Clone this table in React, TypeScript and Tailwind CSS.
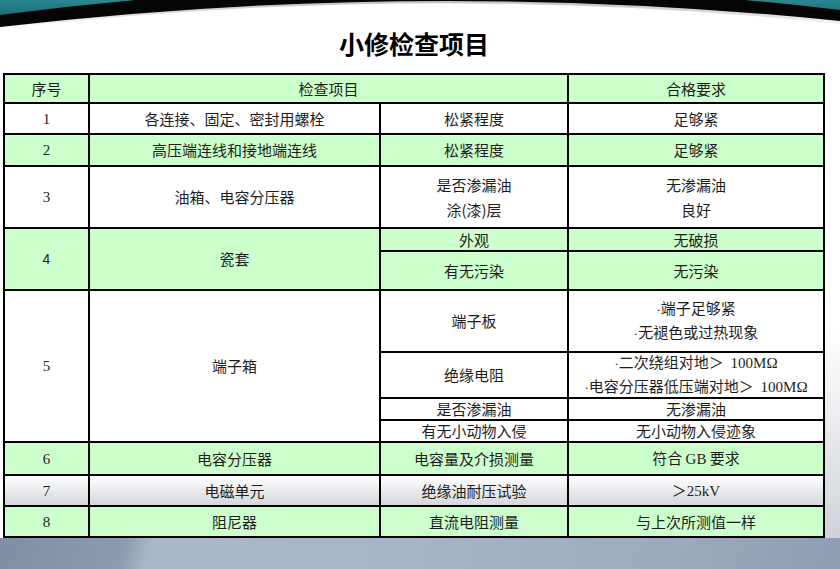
import React from "react";

const G = "bg-[#ccffcc]";
const W = "bg-white";
const R7 = "bg-[linear-gradient(to_bottom,#ffffff,#d4d6db)]";
const NUM = "font-['Liberation_Serif',serif] text-[15px]";

function Cell({
  bg,
  className = "",
  children,
}: {
  bg: string;
  className?: string;
  children?: React.ReactNode;
}) {
  return (
    <div
      className={`${bg} flex flex-col items-center justify-center text-center text-[#1e1e1e] leading-[22px] ${className}`}
    >
      {children}
    </div>
  );
}

function Dot() {
  return <span className="font-['Liberation_Serif',serif] text-[13px]">·</span>;
}

export default function App() {
  return (
    <div className="relative w-[840px] h-[569px] overflow-hidden bg-white flex flex-col font-['Noto_Sans_CJK_SC',sans-serif] text-[15px]">
      <svg
        className="absolute left-0 top-0"
        width="840"
        height="32"
        viewBox="0 0 840 32"
      >
        <defs>
          <linearGradient id="teal" x1="0" y1="0" x2="0" y2="1">
            <stop offset="0" stopColor="#3a9fa8" />
            <stop offset="1" stopColor="#1b6e76" />
          </linearGradient>
          <linearGradient id="shade" x1="0" y1="0" x2="0" y2="1">
            <stop offset="0" stopColor="#000" stopOpacity="0.25" />
            <stop offset="1" stopColor="#000" stopOpacity="0" />
          </linearGradient>
        </defs>
        <path d="M0 0 H840 V24 Q420 -20 0 29 Z" fill="url(#shade)" />
        <path d="M0 0 H840 V21 Q420 -22 0 27 Z" fill="#050505" />
        <path d="M0 0 H840 V10 Q420 -40 0 15 Z" fill="url(#teal)" />
      </svg>

      <div className="relative ml-[3px] w-[822px] h-[73px] pt-[14px] flex items-center justify-center">
        <h1 className="text-[25px] font-bold text-black">小修检查项目</h1>
      </div>

      <div className="flex">
        <div className="w-[3px]" />
        <div className="grid grid-cols-[83px_289px_186px_254px] grid-rows-[27px_29px_30px_60px_21px_37px_60px_44px_20px_20px_31px_29px_29px] gap-[2px] p-[2px] bg-black w-[822px]">
          {/* header */}
          <Cell bg={G}>序号</Cell>
          <Cell bg={G} className="col-span-2">
            检查项目
          </Cell>
          <Cell bg={G}>合格要求</Cell>

          {/* 1 */}
          <Cell bg={W} className={NUM}>
            1
          </Cell>
          <Cell bg={W}>各连接、固定、密封用螺栓</Cell>
          <Cell bg={W}>松紧程度</Cell>
          <Cell bg={W}>足够紧</Cell>

          {/* 2 */}
          <Cell bg={G} className={NUM}>
            2
          </Cell>
          <Cell bg={G}>高压端连线和接地端连线</Cell>
          <Cell bg={G}>松紧程度</Cell>
          <Cell bg={G}>足够紧</Cell>

          {/* 3 */}
          <Cell bg={W} className={NUM}>
            3
          </Cell>
          <Cell bg={W}>油箱、电容分压器</Cell>
          <Cell bg={W} className="leading-[25px]">
            <span>是否渗漏油</span>
            <span>涂(漆)层</span>
          </Cell>
          <Cell bg={W} className="leading-[25px]">
            <span>无渗漏油</span>
            <span>良好</span>
          </Cell>

          {/* 4 */}
          <Cell bg={G} className="row-span-2 text-[14px] font-['Liberation_Sans',sans-serif]">
            4
          </Cell>
          <Cell bg={G} className="row-span-2">
            瓷套
          </Cell>
          <Cell bg={G}>外观</Cell>
          <Cell bg={G}>无破损</Cell>
          <Cell bg={G}>有无污染</Cell>
          <Cell bg={G}>无污染</Cell>

          {/* 5 */}
          <Cell bg={W} className={`row-span-4 ${NUM}`}>
            5
          </Cell>
          <Cell bg={W} className="row-span-4">
            端子箱
          </Cell>
          <Cell bg={W}>端子板</Cell>
          <Cell bg={W} className="leading-[22px]">
            <span>
              <Dot />
              端子足够紧
            </span>
            <span>
              <Dot />
              无褪色或过热现象
            </span>
          </Cell>
          <Cell bg={W}>绝缘电阻</Cell>
          <Cell bg={W} className="leading-[20px]">
            <span>
              <Dot />
              二次绕组对地＞{"\u00a0\u00a0"}
              <span className="font-['Liberation_Serif',serif]">100MΩ</span>
            </span>
            <span>
              <Dot />
              电容分压器低压端对地＞{"\u00a0\u00a0"}
              <span className="font-['Liberation_Serif',serif]">100MΩ</span>
            </span>
          </Cell>
          <Cell bg={W}>是否渗漏油</Cell>
          <Cell bg={W}>无渗漏油</Cell>
          <Cell bg={W}>有无小动物入侵</Cell>
          <Cell bg={W}>无小动物入侵迹象</Cell>

          {/* 6 */}
          <Cell bg={G} className={NUM}>
            6
          </Cell>
          <Cell bg={G}>电容分压器</Cell>
          <Cell bg={G}>电容量及介损测量</Cell>
          <Cell bg={G}>
            <span>
              符合 <span className="font-['Liberation_Serif',serif]">GB</span> 要求
            </span>
          </Cell>

          {/* 7 */}
          <Cell bg={R7} className={NUM}>
            7
          </Cell>
          <Cell bg={R7}>电磁单元</Cell>
          <Cell bg={R7}>绝缘油耐压试验</Cell>
          <Cell bg={R7}>
            <span>
              ＞<span className="font-['Liberation_Serif',serif]">25kV</span>
            </span>
          </Cell>

          {/* 8 */}
          <Cell bg={G} className={NUM}>
            8
          </Cell>
          <Cell bg={G}>阻尼器</Cell>
          <Cell bg={G}>直流电阻测量</Cell>
          <Cell bg={G}>与上次所测值一样</Cell>
        </div>
        <div className="flex-1 bg-[linear-gradient(to_bottom,#ffffff_55%,#cfd3d9)]" />
      </div>

      <div className="flex-1 bg-[linear-gradient(105deg,#7e8fa3_0%,#8b9cb0_15%,#a9b8c9_18%,#a7b6c8_45%,#9aabbe_80%,#8d9eb2_100%)]" />
    </div>
  );
}
